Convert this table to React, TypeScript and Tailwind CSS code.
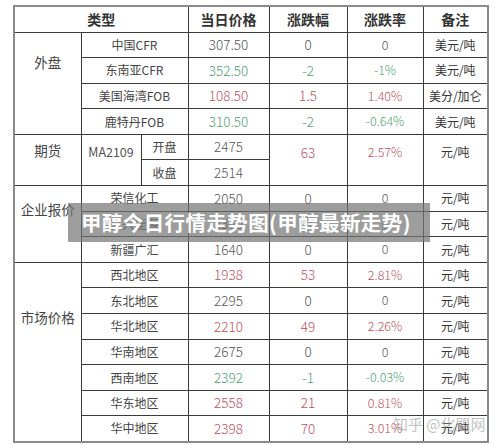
import React from "react";

const R = "text-[#c24f5c]";
const G = "text-[#4fa276]";
const N = "text-[#555]";

type Row = {
  name: string;
  price: string;
  pc: string;
  chg: string;
  rate: string;
  cc: string;
  note: string;
};

const waipan: Row[] = [
  { name: "中国CFR", price: "307.50", pc: N, chg: "0", rate: "0", cc: N, note: "美元/吨" },
  { name: "东南亚CFR", price: "352.50", pc: G, chg: "-2", rate: "-1%", cc: G, note: "美元/吨" },
  { name: "美国海湾FOB", price: "108.50", pc: R, chg: "1.5", rate: "1.40%", cc: R, note: "美分/加仑" },
  { name: "鹿特丹FOB", price: "310.50", pc: G, chg: "-2", rate: "-0.64%", cc: G, note: "美元/吨" },
];

const qiye: Row[] = [
  { name: "荣信化工", price: "2050", pc: N, chg: "0", rate: "0", cc: N, note: "元/吨" },
  { name: "兴兴能源", price: "2360", pc: N, chg: "0", rate: "0", cc: N, note: "元/吨" },
  { name: "新疆广汇", price: "1640", pc: N, chg: "0", rate: "0", cc: N, note: "元/吨" },
];

const shichang: Row[] = [
  { name: "西北地区", price: "1938", pc: R, chg: "53", rate: "2.81%", cc: R, note: "元/吨" },
  { name: "东北地区", price: "2295", pc: N, chg: "0", rate: "0", cc: N, note: "元/吨" },
  { name: "华北地区", price: "2210", pc: R, chg: "49", rate: "2.26%", cc: R, note: "元/吨" },
  { name: "华南地区", price: "2675", pc: N, chg: "0", rate: "0", cc: N, note: "元/吨" },
  { name: "西南地区", price: "2392", pc: G, chg: "-1", rate: "-0.03%", cc: G, note: "元/吨" },
  { name: "华东地区", price: "2558", pc: R, chg: "21", rate: "0.81%", cc: R, note: "元/吨" },
  { name: "华中地区", price: "2398", pc: R, chg: "70", rate: "3.01%", cc: R, note: "元/吨" },
];

const td = "border border-[#3a3a3a] text-center align-middle p-0 leading-none";

function Cells({ r }: { r: Row }) {
  return (
    <>
      <td colSpan={2} className={`${td} text-[12px] text-[#444]`}>{r.name}</td>
      <td className={`${td} text-[13.5px] font-light ${r.pc}`}>{r.price}</td>
      <td className={`${td} text-[13.5px] font-light ${r.cc}`}>{r.chg}</td>
      <td className={`${td} text-[12.5px] font-light ${r.cc}`}>{r.rate}</td>
      <td className={`${td} text-[12px] text-[#333]`}>{r.note}</td>
    </>
  );
}

function Group({ label, rows, pt }: { label: string; rows: Row[]; pt: string }) {
  return (
    <>
      {rows.map((r, i) => (
        <tr key={r.name} className="h-[25.6px]">
          {i === 0 && (
            <td rowSpan={rows.length} className={`${td} align-top text-[13.5px] text-[#444] ${pt}`}>
              {label}
            </td>
          )}
          <Cells r={r} />
        </tr>
      ))}
    </>
  );
}

export default function App() {
  return (
    <div
      className="relative w-[500px] h-[445px] bg-white overflow-hidden pl-[13px] pt-[5px]"
      style={{ fontFamily: '"Noto Sans CJK SC", "Noto Sans", sans-serif' }}
    >
      <table className="w-[474px] table-fixed border-collapse border-2 border-[#8a8a8a]">
        <colgroup>
          <col className="w-[67px]" />
          <col className="w-[60px]" />
          <col className="w-[47px]" />
          <col className="w-[81px]" />
          <col className="w-[78px]" />
          <col className="w-[76px]" />
          <col className="w-[65px]" />
        </colgroup>
        <tbody>
          <tr className="h-[26px]">
            <td colSpan={3} className={`${td} text-[14px] font-bold text-[#333]`}>类型</td>
            <td className={`${td} text-[14px] font-bold text-[#333]`}>当日价格</td>
            <td className={`${td} text-[14px] font-bold text-[#333]`}>涨跌幅</td>
            <td className={`${td} text-[14px] font-bold text-[#333]`}>涨跌率</td>
            <td className={`${td} text-[14px] font-bold text-[#333]`}>备注</td>
          </tr>
          <Group label="外盘" rows={waipan} pt="pt-[23px]" />
          <tr className="h-[25.6px]">
            <td rowSpan={2} className={`${td} align-top pt-[9px] text-[13.5px] text-[#444]`}>期货</td>
            <td rowSpan={2} className={`${td} align-top pt-[11px] text-[12.5px] text-[#555]`}>MA2109</td>
            <td className={`${td} text-[12px] text-[#444]`}>开盘</td>
            <td className={`${td} text-[13.5px] font-light ${N}`}>2475</td>
            <td rowSpan={2} className={`${td} align-top pt-[11px] text-[13.5px] font-light ${R}`}>63</td>
            <td rowSpan={2} className={`${td} align-top pt-[11px] text-[12.5px] font-light ${R}`}>2.57%</td>
            <td rowSpan={2} className={`${td} align-top pt-[11px] text-[12px] text-[#333]`}>元/吨</td>
          </tr>
          <tr className="h-[25.6px]">
            <td className={`${td} text-[12px] text-[#444]`}>收盘</td>
            <td className={`${td} text-[13.5px] font-light ${N}`}>2514</td>
          </tr>
          <Group label="企业报价" rows={qiye} pt="pt-[17px]" />
          <Group label="市场价格" rows={shichang} pt="pt-[48px]" />
        </tbody>
      </table>

      <div className="absolute left-[68px] top-[203px] w-[362px] h-[39px] bg-[rgba(115,115,115,0.7)] flex items-center pl-[13px]">
        <span className="text-white font-bold text-[20.5px] leading-none tracking-[0.4px] whitespace-nowrap">
          甲醇今日行情走势图(甲醇最新走势)
        </span>
      </div>

      <div className="absolute left-[393px] top-[416px] text-[15px] leading-none text-[rgba(140,140,140,0.55)] whitespace-nowrap">
        知乎 @化盟网
      </div>
    </div>
  );
}
